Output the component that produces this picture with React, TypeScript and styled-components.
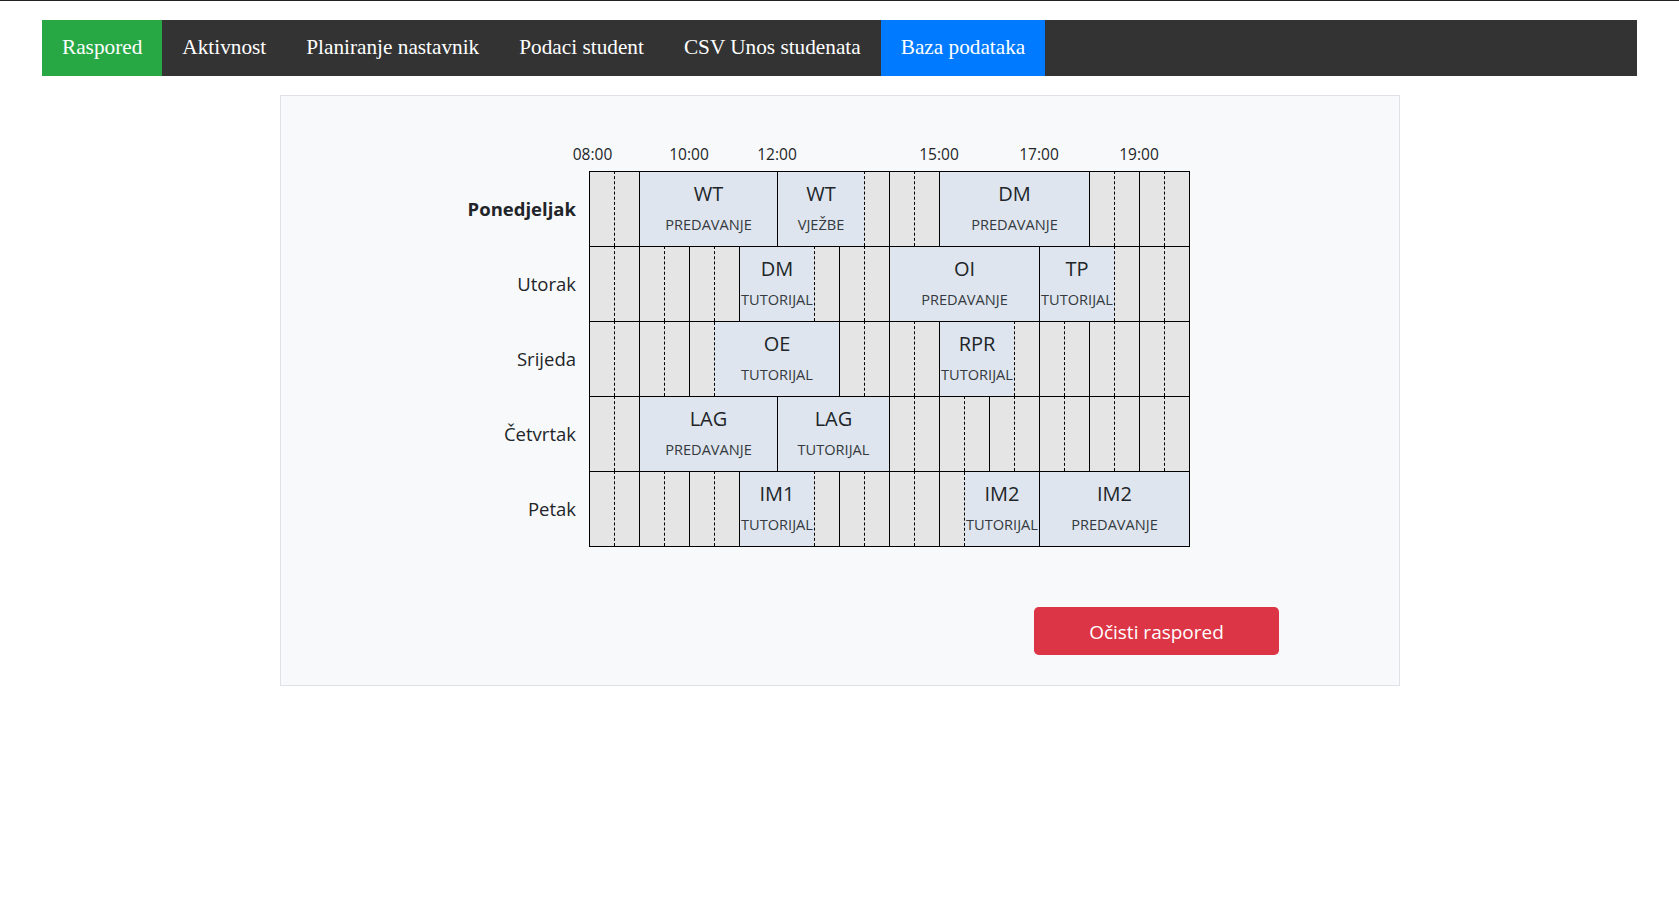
import React from 'react';
import styled, { createGlobalStyle } from 'styled-components';

const SLOT = 25;
const SLOTS = 24;

const GlobalStyle = createGlobalStyle`
  html, body { margin: 0; padding: 0; background: #ffffff; }
  body {
    border-top: 1px solid #222222;
    font-family: "Open Sans", "Noto Sans", Arial, sans-serif;
    color: #212529;
  }
`;

const NavBar = styled.nav`
  display: flex;
  height: 56px;
  margin: 19px 42px 0;
  background: #333333;
`;

const NavItem = styled.a<{ $bg?: string }>`
  display: block;
  box-sizing: border-box;
  height: 56px;
  padding: 15px 20px 0;
  font-family: "Liberation Serif", "Times New Roman", serif;
  font-size: 21.27px;
  line-height: 24px;
  color: #ffffff;
  text-decoration: none;
  white-space: nowrap;
  background: ${(p) => p.$bg ?? 'transparent'};
`;

const Panel = styled.section`
  box-sizing: border-box;
  width: 1120px;
  margin: 19px 0 0 280px;
  padding: 46px 0 30px;
  background: #f8f9fa;
  border: 1px solid #dee2e6;
`;

const AxisRow = styled.div`
  display: flex;
  margin-bottom: 5px;
`;

const LabelSpacer = styled.div`
  width: 308px;
  flex: none;
`;

const Axis = styled.div`
  position: relative;
  width: ${SLOT * SLOTS}px;
  height: 24px;
`;

const TimeLabel = styled.span`
  position: absolute;
  top: 0;
  transform: translateX(-50%);
  font-size: 15.5px;
  line-height: 24px;
  color: #212529;
  white-space: nowrap;
`;

const DayRow = styled.div`
  display: flex;
`;

const DayLabel = styled.div<{ $active?: boolean }>`
  box-sizing: border-box;
  width: 308px;
  height: 75px;
  flex: none;
  padding: 1px 13px 0 0;
  text-align: right;
  font-size: 18.5px;
  line-height: 74px;
  font-weight: ${(p) => (p.$active ? 700 : 400)};
  color: #212529;
`;

const Track = styled.div<{ $last?: boolean }>`
  position: relative;
  display: grid;
  grid-template-columns: repeat(${SLOTS}, ${SLOT}px);
  height: 75px;
  border-right: 1px solid #000000;
  border-bottom: ${(p) => (p.$last ? '1px solid #000000' : 'none')};
`;

const Slot = styled.div<{ $half: boolean }>`
  box-sizing: border-box;
  height: 75px;
  background: #e5e5e5;
  border-top: 1px solid #000000;
  border-left: 1px ${(p) => (p.$half ? 'dashed' : 'solid')} #000000;
`;

const EventBox = styled.div<{ $dashed: boolean }>`
  position: absolute;
  top: 1px;
  height: 74px;
  box-sizing: border-box;
  display: flex;
  flex-direction: column;
  align-items: center;
  padding-top: 7px;
  background: #dee5ee;
  border-left: 1px ${(p) => (p.$dashed ? 'dashed' : 'solid')} #000000;
  overflow: hidden;
`;

const EventTitle = styled.div`
  font-size: 20px;
  line-height: 30px;
  color: #212529;
`;

const EventKind = styled.div`
  margin-top: 5px;
  font-size: 14.6px;
  line-height: 21px;
  color: #343a40;
  white-space: nowrap;
`;

const ButtonRow = styled.div`
  display: flex;
  justify-content: flex-end;
  margin-top: 60px;
  padding-right: 120px;
`;

const DangerButton = styled.button`
  width: 245px;
  height: 48px;
  padding: 2px 0 0;
  border: none;
  border-radius: 4.8px;
  background: #dc3545;
  color: #ffffff;
  font-family: "Open Sans", "Noto Sans", Arial, sans-serif;
  font-size: 19px;
  cursor: pointer;
`;

type Ev = { s: number; e: number; title: string; kind: string };
type Day = { name: string; active?: boolean; events: Ev[] };

const navItems: { label: string; bg?: string }[] = [
  { label: 'Raspored', bg: '#28a745' },
  { label: 'Aktivnost' },
  { label: 'Planiranje nastavnik' },
  { label: 'Podaci student' },
  { label: 'CSV Unos studenata' },
  { label: 'Baza podataka', bg: '#007bff' },
];

const axis: { label: string; at: number }[] = [
  { label: '08:00', at: 3.5 },
  { label: '10:00', at: 100 },
  { label: '12:00', at: 188 },
  { label: '15:00', at: 350 },
  { label: '17:00', at: 450 },
  { label: '19:00', at: 550 },
];

const days: Day[] = [
  {
    name: 'Ponedjeljak',
    active: true,
    events: [
      { s: 2, e: 7.52, title: 'WT', kind: 'PREDAVANJE' },
      { s: 7.52, e: 11, title: 'WT', kind: 'VJEŽBE' },
      { s: 14, e: 20, title: 'DM', kind: 'PREDAVANJE' },
    ],
  },
  {
    name: 'Utorak',
    events: [
      { s: 6, e: 9, title: 'DM', kind: 'TUTORIJAL' },
      { s: 12, e: 18, title: 'OI', kind: 'PREDAVANJE' },
      { s: 18, e: 21, title: 'TP', kind: 'TUTORIJAL' },
    ],
  },
  {
    name: 'Srijeda',
    events: [
      { s: 5, e: 10, title: 'OE', kind: 'TUTORIJAL' },
      { s: 14, e: 17, title: 'RPR', kind: 'TUTORIJAL' },
    ],
  },
  {
    name: 'Četvrtak',
    events: [
      { s: 2, e: 7.52, title: 'LAG', kind: 'PREDAVANJE' },
      { s: 7.52, e: 12, title: 'LAG', kind: 'TUTORIJAL' },
    ],
  },
  {
    name: 'Petak',
    events: [
      { s: 6, e: 9, title: 'IM1', kind: 'TUTORIJAL' },
      { s: 15, e: 18, title: 'IM2', kind: 'TUTORIJAL' },
      { s: 18, e: 24, title: 'IM2', kind: 'PREDAVANJE' },
    ],
  },
];

export default function App() {
  return (
    <>
      <GlobalStyle />
      <NavBar>
        {navItems.map((n) => (
          <NavItem key={n.label} href="#" $bg={n.bg}>
            {n.label}
          </NavItem>
        ))}
      </NavBar>
      <Panel>
        <AxisRow>
          <LabelSpacer />
          <Axis>
            {axis.map((a) => (
              <TimeLabel key={a.label} style={{ left: a.at }}>
                {a.label}
              </TimeLabel>
            ))}
          </Axis>
        </AxisRow>
        {days.map((d, di) => (
          <DayRow key={d.name}>
            <DayLabel $active={d.active}>{d.name}</DayLabel>
            <Track $last={di === days.length - 1}>
              {Array.from({ length: SLOTS }, (_, i) => (
                <Slot key={i} $half={i % 2 === 1} />
              ))}
              {d.events.map((ev, ei) => (
                <EventBox
                  key={ei}
                  $dashed={Number.isInteger(ev.s) && ev.s % 2 === 1}
                  style={{ left: ev.s * SLOT, width: (ev.e - ev.s) * SLOT }}
                >
                  <EventTitle>{ev.title}</EventTitle>
                  <EventKind>{ev.kind}</EventKind>
                </EventBox>
              ))}
            </Track>
          </DayRow>
        ))}
        <ButtonRow>
          <DangerButton type="button">Očisti raspored</DangerButton>
        </ButtonRow>
      </Panel>
    </>
  );
}
